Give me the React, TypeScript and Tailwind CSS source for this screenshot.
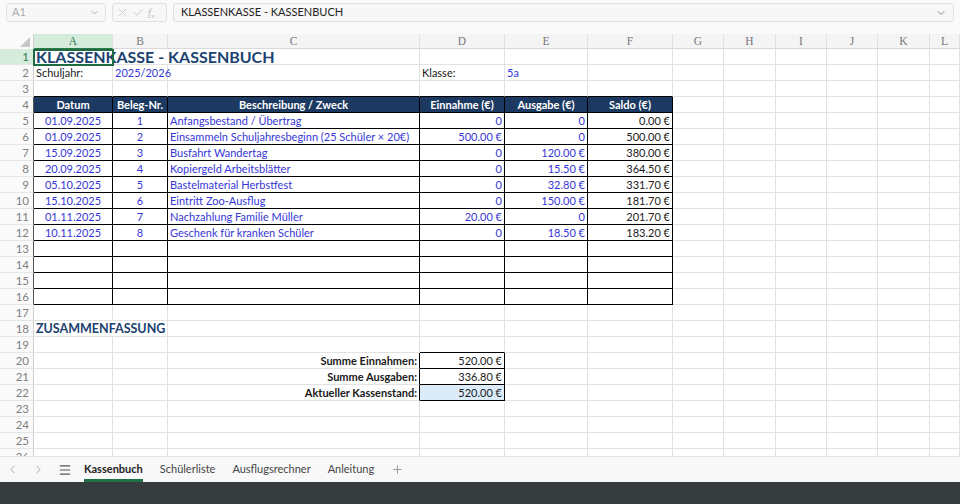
import { ChevronDown, ChevronLeft, ChevronRight, Menu, Plus, X, Check } from 'lucide-react';

const COLS = ['A', 'B', 'C', 'D', 'E', 'F', 'G', 'H', 'I', 'J', 'K', 'L'];
const FONT = { fontFamily: '"Lato", "Open Sans", sans-serif' };

const ROWS = [
  ['01.09.2025', '1', 'Anfangsbestand / Übertrag', '0', '0', '0.00 €'],
  ['01.09.2025', '2', 'Einsammeln Schuljahresbeginn (25 Schüler × 20€)', '500.00 €', '0', '500.00 €'],
  ['15.09.2025', '3', 'Busfahrt Wandertag', '0', '120.00 €', '380.00 €'],
  ['20.09.2025', '4', 'Kopiergeld Arbeitsblätter', '0', '15.50 €', '364.50 €'],
  ['05.10.2025', '5', 'Bastelmaterial Herbstfest', '0', '32.80 €', '331.70 €'],
  ['15.10.2025', '6', 'Eintritt Zoo-Ausflug', '0', '150.00 €', '181.70 €'],
  ['01.11.2025', '7', 'Nachzahlung Familie Müller', '20.00 €', '0', '201.70 €'],
  ['10.11.2025', '8', 'Geschenk für kranken Schüler', '0', '18.50 €', '183.20 €'],
];

const HEAD = ['Datum', 'Beleg-Nr.', 'Beschreibung / Zweck', 'Einnahme (€)', 'Ausgabe (€)', 'Saldo (€)'];

const SUMMARY: Record<number, [string, string]> = {
  20: ['Summe Einnahmen:', '520.00 €'],
  21: ['Summe Ausgaben:', '336.80 €'],
  22: ['Aktueller Kassenstand:', '520.00 €'],
};

const BLUE = 'text-[#3636d8]';
const DARK = 'text-[#1a1a1a]';
const TITLE = 'text-[#1b4270]';
const ALIGN = ['text-center', 'text-center', 'text-left', 'text-right', 'text-right', 'text-right'];

type Cell = { key: string; text?: string; cls: string; span?: string };

function buildRow(r: number): Cell[] {
  const cells: Cell[] = [];
  for (let c = 0; c < COLS.length; c++) {
    const inTable = r >= 4 && r <= 16 && c <= 5;
    const inSum = r >= 20 && r <= 22 && c === 3;
    let right = 'border-r-[#e2e2e2]';
    let bottom = 'border-b-[#e2e2e2]';
    if (inTable || inSum) {
      right = 'border-r-black';
      bottom = 'border-b-black';
    }
    if (r === 3 && c <= 5) bottom = 'border-b-black';
    if (r === 19 && c === 3) bottom = 'border-b-black';
    if (r >= 20 && r <= 22 && c === 2) right = 'border-r-black';

    let text: string | undefined;
    let cls = DARK;
    let span: string | undefined;

    if (r === 1) {
      if (c === 0) {
        text = 'KLASSENKASSE - KASSENBUCH';
        span = 'col-span-3';
        cls = `font-bold text-[16px] leading-[16px] ${TITLE}`;
      } else if (c <= 2) continue;
    } else if (r === 2) {
      if (c === 0) text = 'Schuljahr:';
      if (c === 1) { text = '2025/2026'; cls = BLUE; }
      if (c === 3) text = 'Klasse:';
      if (c === 4) { text = '5a'; cls = BLUE; }
    } else if (r === 4 && c <= 5) {
      text = HEAD[c];
      cls = 'bg-[#1c3962] text-white font-bold text-center';
    } else if (r >= 5 && r <= 12 && c <= 5) {
      text = ROWS[r - 5][c];
      cls = `${ALIGN[c]} ${c === 5 ? DARK : BLUE}`;
    } else if (r === 18) {
      if (c === 0) {
        text = 'ZUSAMMENFASSUNG';
        span = 'col-span-2';
        cls = `font-bold text-[12.5px] leading-[16px] ${TITLE}`;
      } else if (c === 1) continue;
    } else if (SUMMARY[r]) {
      if (c === 2) { text = SUMMARY[r][0]; cls = `font-bold text-right ${DARK}`; }
      if (c === 3) {
        text = SUMMARY[r][1];
        cls = `text-right ${DARK} ${r === 22 ? 'bg-[#dcebf8]' : ''}`;
      }
    }

    cells.push({
      key: `${r}-${c}`,
      text,
      span,
      cls: `border-r border-b ${right} ${bottom} ${cls}`,
    });
  }
  return cells;
}

function Toolbar() {
  return (
    <div className="h-[34px] flex items-start gap-[6px] pt-[3px] px-[6px] bg-[#fafafa]">
      <div className="w-[100px] h-[19px] border border-[#e0e0e0] rounded-[3px] bg-[#f7f7f7] flex items-center justify-between px-[5px] text-[11px] text-[#aaa]">
        <span>A1</span>
        <ChevronDown size={11} strokeWidth={1.5} className="text-[#999]" />
      </div>
      <div className="w-[55px] h-[19px] border border-[#e0e0e0] rounded-[3px] bg-[#f7f7f7] flex items-center gap-[3px] px-[3px] text-[#bbb]">
        <X size={13} strokeWidth={1.2} />
        <Check size={13} strokeWidth={1.2} />
        <span className="italic text-[11px]" style={{ fontFamily: '"Liberation Serif", serif' }}>
          f<sub className="text-[7px]">x</sub>
        </span>
      </div>
      <div className="flex-1 h-[19px] border border-[#e0e0e0] rounded-[3px] bg-[#f7f7f7] flex items-center justify-between pl-[7px] pr-[6px] text-[11px] text-[#222]">
        <span>KLASSENKASSE - KASSENBUCH</span>
        <ChevronDown size={12} strokeWidth={1.5} className="text-[#666]" />
      </div>
    </div>
  );
}

const GRID = 'grid grid-cols-[34px_79px_55px_252px_85px_83px_85px_51px_52px_51px_51px_52px_1fr]';

function ColumnHeader() {
  return (
    <div className={`${GRID} h-[15px] bg-[#f4f4f4]`} style={{ fontFamily: '"Liberation Serif", serif' }}>
      <div className="relative border-r border-[#cfcfcf] bg-[#fafafa]">
        <div className="absolute right-[3px] bottom-[2px] w-0 h-0 border-l-[10px] border-l-transparent border-b-[10px] border-b-[#c8c8c8]" />
      </div>
      {COLS.map((c, i) => (
        <div
          key={c}
          className={`text-center text-[11.5px] leading-[14px] border-r border-[#e0e0e0] ${
            i === 0 ? 'bg-[#d5ecdc] text-[#2f7a4c] border-b border-b-[#2f7a4c]' : 'text-[#777] border-b border-b-[#d8d8d8]'
          }`}
        >
          {c}
        </div>
      ))}
    </div>
  );
}

function Sheet() {
  const rows = Array.from({ length: 26 }, (_, i) => i + 1);
  return (
    <div className="flex-1 overflow-hidden relative bg-white" style={FONT}>
      <div className={GRID}>
        {rows.map((r) => (
          <div key={r} className="contents">
            <div
              className={`h-4 text-right pr-[4px] text-[11.5px] leading-[15px] border-r border-b border-b-[#e6e6e6] ${
                r >= 4 && r <= 16 ? 'border-r-[#555]' : 'border-r-[#cfcfcf]'
              } ${r === 1 ? 'bg-[#d5ecdc] text-[#2f7a4c]' : 'bg-[#fafafa] text-[#808080]'}`}
            >
              {r}
            </div>
            {buildRow(r).map((cell) => (
              <div
                key={cell.key}
                className={`h-4 px-[2px] text-[11px] leading-[15px] whitespace-nowrap ${cell.span ?? ''} ${cell.cls}`}
              >
                {cell.text}
              </div>
            ))}
          </div>
        ))}
      </div>
      <div className="absolute left-[33px] top-0 w-[81px] h-[17px] border-2 border-[#1e6b41]" />
    </div>
  );
}

function Tabs() {
  const tabs = ['Kassenbuch', 'Schülerliste', 'Ausflugsrechner', 'Anleitung'];
  return (
    <div className="h-[26px] flex items-stretch bg-[#f8f8f8] border-t border-[#e4e4e4] text-[11px] text-[#444]" style={FONT}>
      <div className="flex items-center pl-[6px] gap-[13px] text-[#999]">
        <ChevronLeft size={13} strokeWidth={1.5} />
        <ChevronRight size={13} strokeWidth={1.5} />
        <Menu size={14} strokeWidth={2} className="text-[#555]" />
      </div>
      <div className="flex items-stretch ml-[12px] gap-[17px]">
        {tabs.map((t, i) => (
          <div
            key={t}
            className={`flex items-center border-b-[3px] pt-[2px] ${i === 0 ? 'border-[#1e7145] font-bold text-[#222]' : 'border-transparent'}`}
          >
            {t}
          </div>
        ))}
        <div className="flex items-center text-[#888]">
          <Plus size={13} strokeWidth={1.5} />
        </div>
      </div>
    </div>
  );
}

export default function App() {
  return (
    <div className="w-[960px] h-[504px] flex flex-col overflow-hidden bg-white" style={FONT}>
      <Toolbar />
      <ColumnHeader />
      <Sheet />
      <Tabs />
      <div className="h-[22px] bg-[#363b3d]" />
    </div>
  );
}
